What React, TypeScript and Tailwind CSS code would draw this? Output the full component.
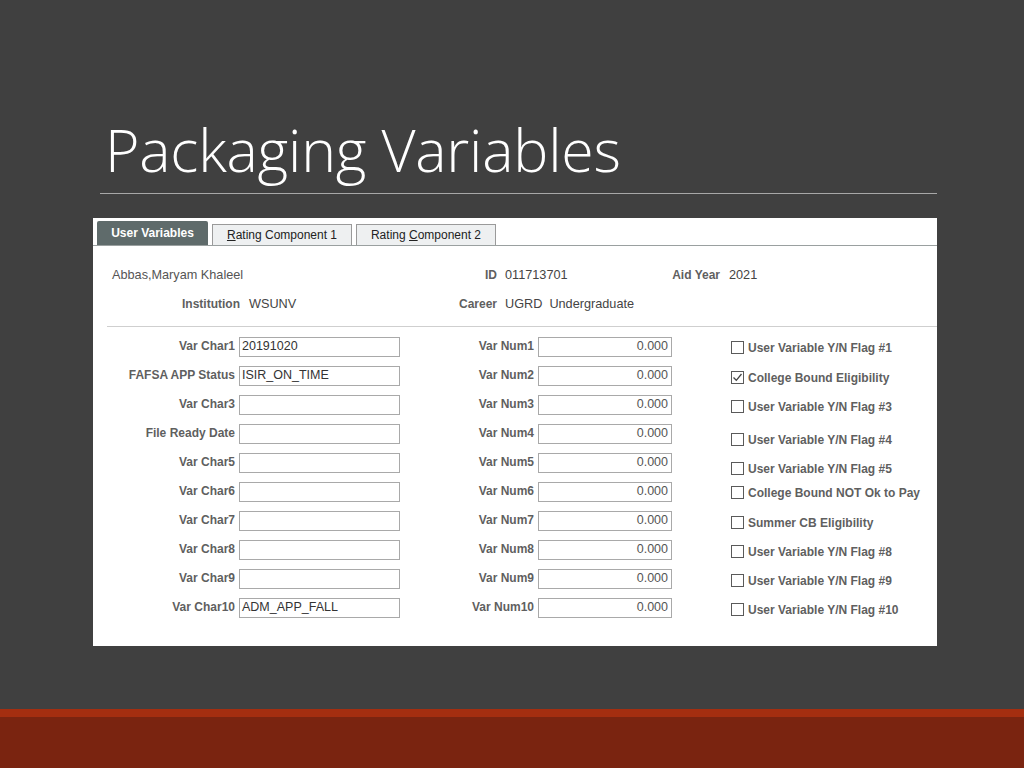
import type { ReactNode } from "react";

const ui = { fontFamily: '"Liberation Sans", Arial, sans-serif' };

const rows = [
  { char: "Var Char1", charVal: "20191020", num: "Var Num1", flag: "User Variable Y/N Flag #1", checked: false, shift: "pt-[2px]" },
  { char: "FAFSA APP Status", charVal: "ISIR_ON_TIME", num: "Var Num2", flag: "College Bound Eligibility", checked: true, shift: "pt-[4px]" },
  { char: "Var Char3", charVal: "", num: "Var Num3", flag: "User Variable Y/N Flag #3", checked: false, shift: "pt-[4px]" },
  { char: "File Ready Date", charVal: "", num: "Var Num4", flag: "User Variable Y/N Flag #4", checked: false, shift: "pt-[12px]" },
  { char: "Var Char5", charVal: "", num: "Var Num5", flag: "User Variable Y/N Flag #5", checked: false, shift: "pt-[12px]" },
  { char: "Var Char6", charVal: "", num: "Var Num6", flag: "College Bound NOT Ok to Pay", checked: false, shift: "pt-[2px]" },
  { char: "Var Char7", charVal: "", num: "Var Num7", flag: "Summer CB Eligibility", checked: false, shift: "pt-[4px]" },
  { char: "Var Char8", charVal: "", num: "Var Num8", flag: "User Variable Y/N Flag #8", checked: false, shift: "pt-[4px]" },
  { char: "Var Char9", charVal: "", num: "Var Num9", flag: "User Variable Y/N Flag #9", checked: false, shift: "pt-[4px]" },
  { char: "Var Char10", charVal: "ADM_APP_FALL", num: "Var Num10", flag: "User Variable Y/N Flag #10", checked: false, shift: "pt-[4px]" },
];

function Label({ children }: { children: ReactNode }) {
  return <span className="text-[12px] font-bold text-[#5f5f5f]">{children}</span>;
}

function Box({ checked }: { checked: boolean }) {
  return (
    <span className="flex h-[13px] w-[13px] items-center justify-center border border-[#5a5a5a] bg-white">
      {checked && (
        <svg width="11" height="11" viewBox="0 0 11 11">
          <path d="M1.5 5.5 L4.3 8.3 L9.5 2" fill="none" stroke="#444" strokeWidth="1.3" />
        </svg>
      )}
    </span>
  );
}

export default function App() {
  return (
    <div className="flex h-[768px] w-[1024px] flex-col bg-[#404040]">
      <div className="h-[193px] pl-[105px] pt-[120px]">
        <h1
          className="text-[59px] font-light leading-none tracking-[-0.2px] text-white"
          style={{ fontFamily: '"Open Sans", sans-serif' }}
        >
          Packaging Variables
        </h1>
      </div>
      <div className="ml-[100px] h-px w-[837px] bg-[#a8a8a8]" />

      <div className="ml-[93px] mt-[24px] h-[428px] w-[844px] bg-white text-[12px] text-[#444]" style={ui}>
        <div className="flex h-[28px] items-end border-b border-[#9aa0a0] pl-[4px]">
          <div className="flex h-[24px] w-[111px] items-center justify-center rounded-t-[2px] bg-[#5f6b6b] font-bold text-white">
            User Variables
          </div>
          <div className="ml-[4px] flex h-[21px] w-[140px] items-center justify-center border border-b-0 border-[#9a9a9a] bg-[#eef0f1] text-[#222]">
            <span className="underline">R</span>ating Component 1
          </div>
          <div className="ml-[4px] flex h-[21px] w-[140px] items-center justify-center border border-b-0 border-[#9a9a9a] bg-[#eef0f1] text-[#222]">
            Rating&nbsp;<span className="underline">C</span>omponent 2
          </div>
        </div>

        <div className="mt-[15px] flex h-[29px] items-center text-[12.7px]">
          <div className="flex w-[404px] items-center justify-between pl-[19px]">
            <span className="text-[#555]">Abbas,Maryam Khaleel</span>
            <Label>ID</Label>
          </div>
          <div className="flex w-[223px] items-center justify-between pl-[8px]">
            <span>011713701</span>
            <Label>Aid Year</Label>
          </div>
          <span className="pl-[9px]">2021</span>
        </div>
        <div className="flex h-[29px] items-center text-[12.7px]">
          <div className="w-[147px] text-right">
            <Label>Institution</Label>
          </div>
          <div className="flex w-[257px] items-center justify-between pl-[9px]">
            <span>WSUNV</span>
            <Label>Career</Label>
          </div>
          <span className="pl-[8px]">UGRD&nbsp;&nbsp;Undergraduate</span>
        </div>

        <div className="ml-[14px] mt-[7px] h-px bg-[#cfcfcf]" />

        <div className="pt-[5px]">
          {rows.map((r) => (
            <div key={r.char} className="flex h-[29px] items-center">
              <div className="w-[142px] pb-[2px] text-right">
                <Label>{r.char}</Label>
              </div>
              <div className="ml-[4px] flex h-[20px] w-[161px] items-center border border-[#a9a9a9] pl-[2px] text-[12.5px] text-[#333]">
                {r.charVal}
              </div>
              <div className="w-[134px] pb-[2px] text-right">
                <Label>{r.num}</Label>
              </div>
              <div className="ml-[4px] flex h-[20px] w-[134px] items-center justify-end border border-[#a9a9a9] pr-[3px] text-[12.5px] text-[#555]">
                0.000
              </div>
              <div className={`ml-[59px] flex h-[29px] items-center gap-[4px] ${r.shift}`}>
                <Box checked={r.checked} />
                <Label>{r.flag}</Label>
              </div>
            </div>
          ))}
        </div>
      </div>

      <div className="mt-[63px] h-[8px] bg-[#a42e10]" />
      <div className="flex-1 bg-[#7a2410]" />
    </div>
  );
}
